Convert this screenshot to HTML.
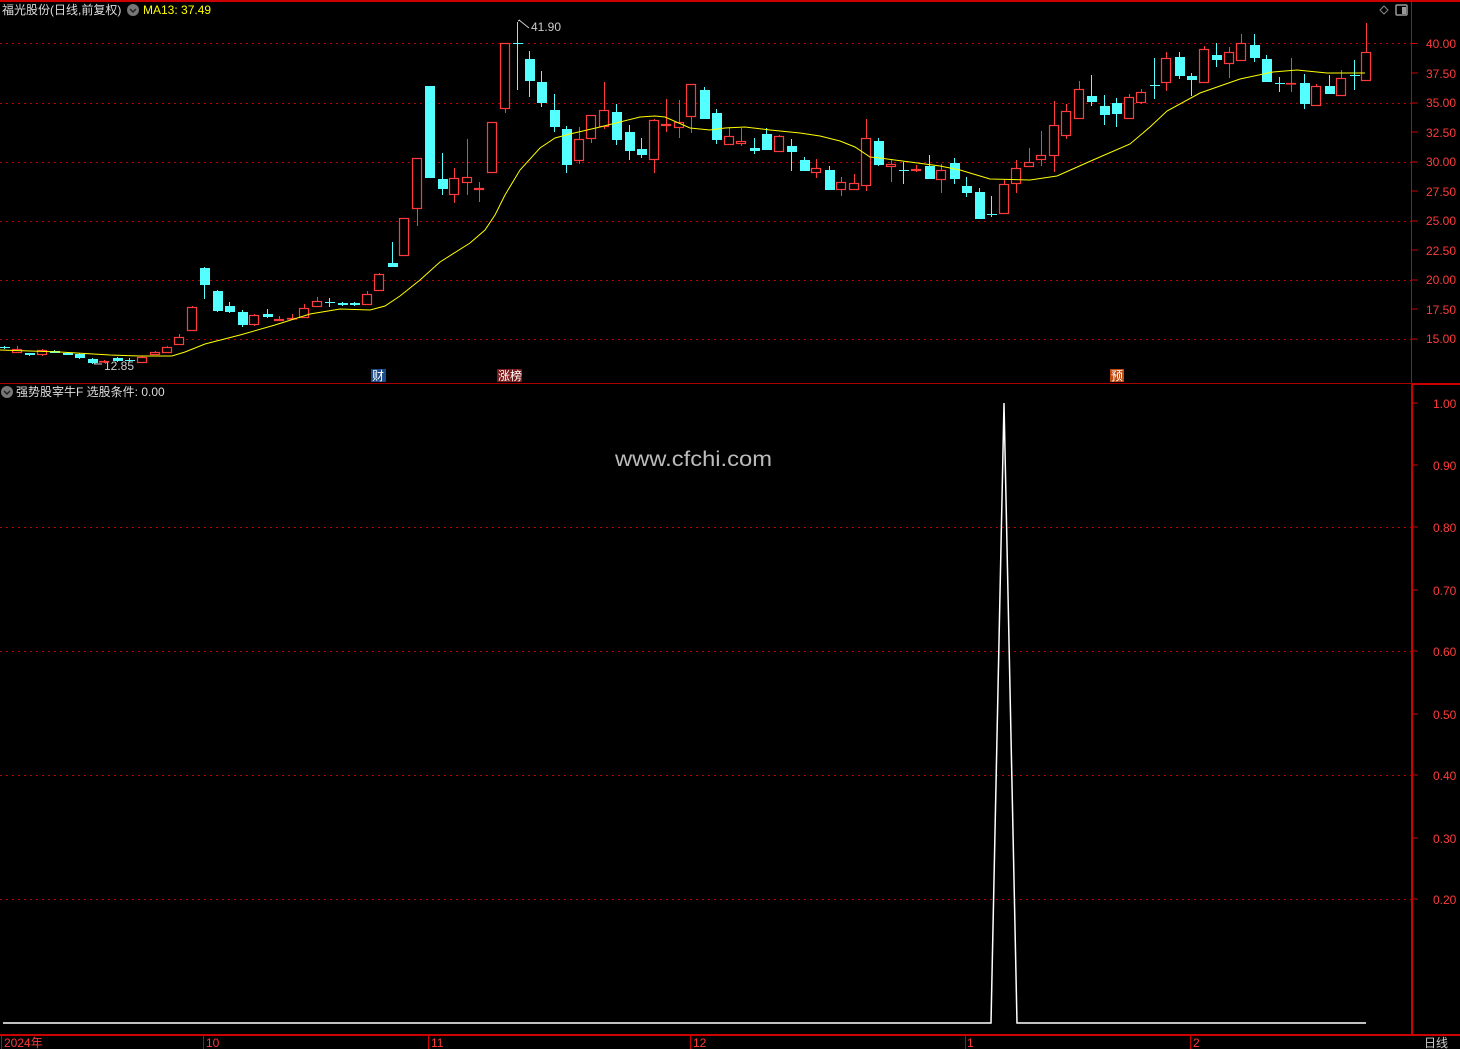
<!DOCTYPE html>
<html><head><meta charset="utf-8"><style>
html,body{margin:0;padding:0;background:#000;width:1460px;height:1049px;overflow:hidden}
svg{display:block}
text{font-family:"Liberation Sans","Noto Sans CJK SC",sans-serif}
</style></head><body>
<svg id="s" width="1460" height="1049" xmlns="http://www.w3.org/2000/svg">
<rect width="1460" height="1049" fill="#000"/>
<line x1="0" y1="1" x2="1460" y2="1" stroke="#c00" stroke-width="2"/>
<g stroke="#b00" stroke-dasharray="2,4" stroke-width="1">
<line x1="0" y1="43.5" x2="1411" y2="43.5"/><line x1="0" y1="103.5" x2="1411" y2="103.5"/>
<line x1="0" y1="162.5" x2="1411" y2="162.5"/><line x1="0" y1="221.5" x2="1411" y2="221.5"/>
<line x1="0" y1="280.5" x2="1411" y2="280.5"/><line x1="0" y1="339.5" x2="1411" y2="339.5"/>
<line x1="0" y1="527.5" x2="1411" y2="527.5"/><line x1="0" y1="651.5" x2="1411" y2="651.5"/>
<line x1="0" y1="775.5" x2="1411" y2="775.5"/><line x1="0" y1="899.5" x2="1411" y2="899.5"/>
</g>
<line x1="0" y1="383.5" x2="1460" y2="383.5" stroke="#a00" stroke-width="1"/>
<line x1="1412" y1="384" x2="1460" y2="384" stroke="#c00" stroke-width="2"/>
<line x1="1411.5" y1="0" x2="1411.5" y2="383" stroke="#c00"/>
<line x1="1412" y1="384" x2="1412" y2="1035" stroke="#c00" stroke-width="2"/>
<line x1="0" y1="1035" x2="1460" y2="1035" stroke="#c00" stroke-width="2"/>
<g id="ticks" stroke="#c00"></g>
<g fill="#ff3b3b" font-size="12">
<text x="1426" y="48">40.00</text><text x="1426" y="78">37.50</text><text x="1426" y="107">35.00</text>
<text x="1426" y="137">32.50</text><text x="1426" y="166">30.00</text><text x="1426" y="196">27.50</text>
<text x="1426" y="225">25.00</text><text x="1426" y="255">22.50</text><text x="1426" y="284">20.00</text>
<text x="1426" y="314">17.50</text><text x="1426" y="343">15.00</text>
<text x="1433" y="408">1.00</text><text x="1433" y="470">0.90</text><text x="1433" y="532">0.80</text>
<text x="1433" y="595">0.70</text><text x="1433" y="656">0.60</text><text x="1433" y="719">0.50</text>
<text x="1433" y="780">0.40</text><text x="1433" y="843">0.30</text><text x="1433" y="904">0.20</text>
<text x="4" y="1047">2024年</text><text x="206" y="1047">10</text><text x="431" y="1047">11</text>
<text x="693" y="1047">12</text><text x="967" y="1047">1</text><text x="1193" y="1047">2</text>
</g>
<g stroke="#c00"><line x1="203.5" y1="1035" x2="203.5" y2="1049"/><line x1="428.5" y1="1035" x2="428.5" y2="1049"/><line x1="690.5" y1="1035" x2="690.5" y2="1049"/><line x1="965.5" y1="1035" x2="965.5" y2="1049"/><line x1="1190.5" y1="1035" x2="1190.5" y2="1049"/><line x1="1.5" y1="1035" x2="1.5" y2="1049"/></g>
<text x="1424" y="1047" fill="#ccc" font-size="12">日线</text>
<text x="2" y="14" fill="#ddd" font-size="12">福光股份(日线,前复权)</text>
<circle cx="133" cy="10" r="6" fill="#777"/><path d="M130 9 L133 12 L136 9" stroke="#222" fill="none" stroke-width="1.5"/>
<text x="143" y="14" fill="#ff0" font-size="12">MA13: 37.49</text>
<path d="M1380 10 L1384 6 L1388 10 L1384 14 Z" stroke="#888" fill="none"/>
<rect x="1396" y="5" width="11" height="10" rx="1" stroke="#999" fill="none" stroke-width="1.5"/><rect x="1402" y="7" width="4" height="7" fill="#999"/>
<circle cx="7" cy="392" r="6" fill="#777"/><path d="M4 391 L7 394 L10 391" stroke="#222" fill="none" stroke-width="1.5"/>
<text x="16" y="396" fill="#ddd" font-size="12">强势股宰牛F  选股条件: 0.00</text>
<text x="615" y="466" fill="#bbb" font-size="21" textLength="157" lengthAdjust="spacingAndGlyphs">www.cfchi.com</text>
<text x="531" y="31" fill="#ccc" font-size="12">41.90</text>
<path d="M518 21 L520 20 M519 20 L529 28" stroke="#ccc" fill="none"/>
<text x="104" y="370" fill="#ccc" font-size="12">12.85</text>
<path d="M94 364 L102 364 M94 364 L97 361" stroke="#ccc" fill="none"/>
<rect x="371" y="369" width="15" height="13" fill="#1c4a8a"/><text x="372" y="380" fill="#fff" font-size="12">财</text>
<rect x="497" y="369" width="25" height="13" fill="#7a1a1a"/><text x="498" y="380" fill="#fff" font-size="12">涨榜</text>
<rect x="1110" y="369" width="14" height="13" fill="#c04a10"/><text x="1111" y="380" fill="#fff" font-size="12">预</text>
<g id="c"></g>
<polyline fill="none" stroke="#ff0" stroke-width="1" points="0,350 60,352 110,355 140,356 172,356 185,352 205,344 240,335 275,325 310,314 340,309 370,310 385,306 400,296 420,280 440,262 470,243 485,230 495,215 505,195 520,170 540,148 555,138 570,134 600,127 620,122 640,117 655,116 665,117 690,128 710,130 725,128 745,127 770,130 800,133 820,136 840,141 855,147 870,157 880,158 910,162 940,166 960,170 990,179 1030,180 1057,176 1093,160 1130,144 1150,127 1167,111 1200,93 1240,79 1273,72 1297,70 1327,73 1365,73"/>
<polyline fill="none" stroke="#fff" stroke-width="1.5" points="3,1023 991,1023 1004,403 1017,1023 1366,1023"/>
</svg>
<script>
var d=[[4,347,348,346,349],[17,353,349,346,353],[29,353,355,353,356],[42,355,350,349,356],[54,351,353,350,353],[67,353,355,352,355],[79,354,358,353,359],[92,359,363,358,364],[104,362,361,360,363],[117,358,361,357,362],[129,360,361,358,362],[142,363,357,356,363],[155,355,352,351,355],[167,353,347,346,353],[179,345,337,334,345],[192,331,307,306,331],[204,268,285,267,299],[217,291,311,290,312],[229,306,312,302,313],[242,312,325,310,327],[254,325,315,314,326],[267,314,317,309,318],[279,321,319,316,321],[292,319,318,314,320],[304,318,308,304,318],[317,307,301,297,307],[329,302,303,298,307],[342,303,305,302,306],[354,303,305,302,306],[367,305,294,291,305],[379,291,274,273,291],[392,263,267,242,267],[404,256,218,218,256],[417,209,158,158,226],[429,86,178,86,178],[442,179,189,153,195],[454,195,178,168,203],[467,183,177,139,195],[479,190,188,182,202],[492,173,122,122,173],[505,109,43,43,113],[517,43,44,22,90],[529,59,81,51,97],[541,82,103,71,107],[554,110,127,94,132],[566,129,165,126,173],[579,161,139,127,164],[591,139,115,115,143],[604,127,110,82,129],[616,112,140,104,145],[629,132,151,125,160],[641,149,155,138,158],[654,160,120,119,173],[666,126,124,99,132],[679,128,122,100,138],[691,117,84,84,133],[704,90,119,87,119],[716,113,140,109,144],[729,145,136,127,145],[741,144,141,128,146],[754,148,151,138,154],[766,134,150,128,150],[779,152,136,135,152],[791,146,152,139,171],[804,160,171,157,171],[816,173,168,159,178],[829,170,190,166,190],[841,190,182,177,196],[854,190,183,174,190],[866,186,138,119,191],[878,141,165,138,166],[891,167,164,159,182],[903,170,171,162,184],[916,171,169,165,172],[929,166,179,155,179],[941,180,170,164,193],[954,163,179,158,184],[966,186,193,177,197],[979,192,219,188,219],[991,214,215,196,217],[1004,214,184,180,214],[1016,184,168,160,193],[1029,167,162,148,167],[1041,160,155,131,166],[1054,156,125,101,172],[1066,136,111,104,139],[1079,119,89,81,119],[1091,96,102,75,106],[1104,106,115,95,125],[1116,103,114,98,127],[1129,119,97,94,119],[1141,103,92,89,104],[1154,85,86,58,99],[1166,83,58,52,91],[1179,57,76,52,79],[1191,76,80,73,96],[1204,83,49,46,83],[1216,55,60,43,67],[1229,64,52,47,78],[1241,61,43,34,61],[1254,45,58,34,62],[1266,59,82,55,82],[1279,83,84,77,92],[1291,84,83,58,92],[1304,83,104,74,109],[1316,106,86,84,106],[1329,86,94,75,94],[1341,96,78,70,96],[1354,75,76,60,90],[1366,81,52,23,81]];
var h='';d.forEach(function(c){var x=c[0],o=c[1],cl=c[2],hi=c[3],lo=c[4];var up=cl<o;var col=up?'#ff3b3b':'#54ffff';var t=Math.min(o,cl),b=Math.max(o,cl);if(b-t<1)b=t+1;
h+='<line x1="'+(x+.5)+'" y1="'+hi+'" x2="'+(x+.5)+'" y2="'+lo+'" stroke="'+col+'"/>';
if(up)h+='<rect x="'+(x-4.5)+'" y="'+(t+.5)+'" width="9" height="'+(b-t-1||0.5)+'" fill="#000" stroke="'+col+'" stroke-width="1.2"/>';
else h+='<rect x="'+(x-4)+'" y="'+t+'" width="10" height="'+(b-t)+'" fill="'+col+'"/>';});
document.getElementById('c').innerHTML=h;
var tk='';[43.5,73,103,132,162,191,221,250,280,309,339].forEach(function(y){tk+='<line x1="1412" y1="'+y+'" x2="1418" y2="'+y+'"/>'});
[403,465,527,590,651,714,775,838,899].forEach(function(y){tk+='<line x1="1413" y1="'+y+'" x2="1418" y2="'+y+'"/>'});
document.getElementById('ticks').innerHTML=tk;
</script>
</body></html>
